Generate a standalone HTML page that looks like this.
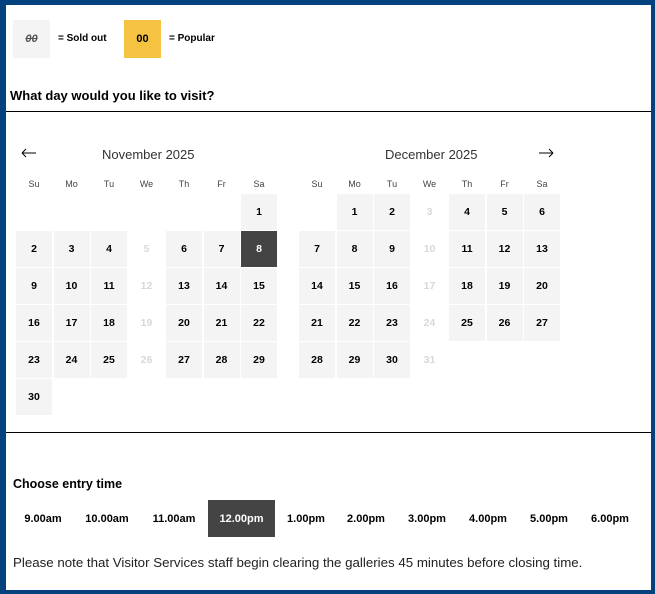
<!DOCTYPE html>
<html><head><style>
*{margin:0;padding:0;box-sizing:border-box}
html,body{width:655px;height:594px;overflow:hidden;background:#fff;font-family:"Liberation Sans",sans-serif;color:#000}
.frame{position:absolute;left:0;top:0;width:655px;height:594px;border-style:solid;border-color:#04417f;border-width:5px 4px 4px 6px}
.a{position:absolute}
.lg{width:37px;height:38px;background:#f4f4f4;display:flex;align-items:center;justify-content:center;font-size:11px;font-weight:bold}
.lt{font-size:10px;font-weight:bold}
.hr{left:6px;width:645px;height:1px;background:#000}
.grid{position:absolute;display:grid;grid-template-columns:repeat(7,36px);column-gap:1.5px;row-gap:1px;grid-auto-rows:36px}
.grid div{background:#f4f4f4;display:flex;align-items:center;justify-content:center;font-size:10.5px;font-weight:bold}
.grid div.e{background:none}
.grid div.x{background:none;color:#d8d8d8}
.grid div.s{background:#444;color:#fff}
.dh{position:absolute;display:grid;grid-template-columns:repeat(7,36px);column-gap:1.5px;font-size:9px;color:#444;text-align:center}
.mt{font-size:13px;color:#333}
.tm{position:absolute;top:500px;height:37px;display:flex;align-items:center;justify-content:center;font-size:11px;font-weight:bold}
</style></head><body>
<div class="frame"></div>
<div class="a lg" style="left:13px;top:20px;color:#555;font-style:italic;text-decoration:line-through">00</div>
<div class="a lt" style="left:58px;top:33px">= Sold out</div>
<div class="a lg" style="left:124px;top:20px;background:#f5c242">00</div>
<div class="a lt" style="left:169px;top:33px">= Popular</div>
<div class="a" style="left:10px;top:88px;font-size:13px;font-weight:bold">What day would you like to visit?</div>
<div class="a hr" style="top:111px"></div>
<svg class="a" style="left:21px;top:148px" width="16" height="10"><path d="M1 5H15M1 5L5 1M1 5L5 9" stroke="#000" fill="none" stroke-width="1"/></svg>
<div class="a mt" style="left:102px;top:147px">November 2025</div>
<div class="a mt" style="left:385px;top:147px">December 2025</div>
<svg class="a" style="left:538px;top:148px" width="16" height="10"><path d="M1 5H15M15 5L11 1M15 5L11 9" stroke="#000" fill="none" stroke-width="1"/></svg>
<div class="dh" style="left:16px;top:179px"><span>Su</span><span>Mo</span><span>Tu</span><span>We</span><span>Th</span><span>Fr</span><span>Sa</span></div>
<div class="dh" style="left:299px;top:179px"><span>Su</span><span>Mo</span><span>Tu</span><span>We</span><span>Th</span><span>Fr</span><span>Sa</span></div>
<div class="grid" style="left:16px;top:194px">
<div class="e"></div><div class="e"></div><div class="e"></div><div class="e"></div><div class="e"></div><div class="e"></div><div>1</div>
<div>2</div><div>3</div><div>4</div><div class="x">5</div><div>6</div><div>7</div><div class="s">8</div>
<div>9</div><div>10</div><div>11</div><div class="x">12</div><div>13</div><div>14</div><div>15</div>
<div>16</div><div>17</div><div>18</div><div class="x">19</div><div>20</div><div>21</div><div>22</div>
<div>23</div><div>24</div><div>25</div><div class="x">26</div><div>27</div><div>28</div><div>29</div>
<div>30</div>
</div>
<div class="grid" style="left:299px;top:194px">
<div class="e"></div><div>1</div><div>2</div><div class="x">3</div><div>4</div><div>5</div><div>6</div>
<div>7</div><div>8</div><div>9</div><div class="x">10</div><div>11</div><div>12</div><div>13</div>
<div>14</div><div>15</div><div>16</div><div class="x">17</div><div>18</div><div>19</div><div>20</div>
<div>21</div><div>22</div><div>23</div><div class="x">24</div><div>25</div><div>26</div><div>27</div>
<div>28</div><div>29</div><div>30</div><div class="x">31</div>
</div>
<div class="a hr" style="top:432px"></div>
<div class="a" style="left:13px;top:477px;font-size:12.5px;font-weight:bold">Choose entry time</div>
<div class="tm" style="left:13px;width:60px">9.00am</div>
<div class="tm" style="left:77px;width:60px">10.00am</div>
<div class="tm" style="left:144px;width:60px">11.00am</div>
<div class="tm" style="left:208px;width:67px;background:#444;color:#fff">12.00pm</div>
<div class="tm" style="left:276px;width:60px">1.00pm</div>
<div class="tm" style="left:336px;width:60px">2.00pm</div>
<div class="tm" style="left:397px;width:60px">3.00pm</div>
<div class="tm" style="left:458px;width:60px">4.00pm</div>
<div class="tm" style="left:519px;width:60px">5.00pm</div>
<div class="tm" style="left:580px;width:60px">6.00pm</div>
<div class="a" style="left:13px;top:555px;font-size:13.3px;color:#222">Please note that Visitor Services staff begin clearing the galleries 45 minutes before closing time.</div>
</body></html>
